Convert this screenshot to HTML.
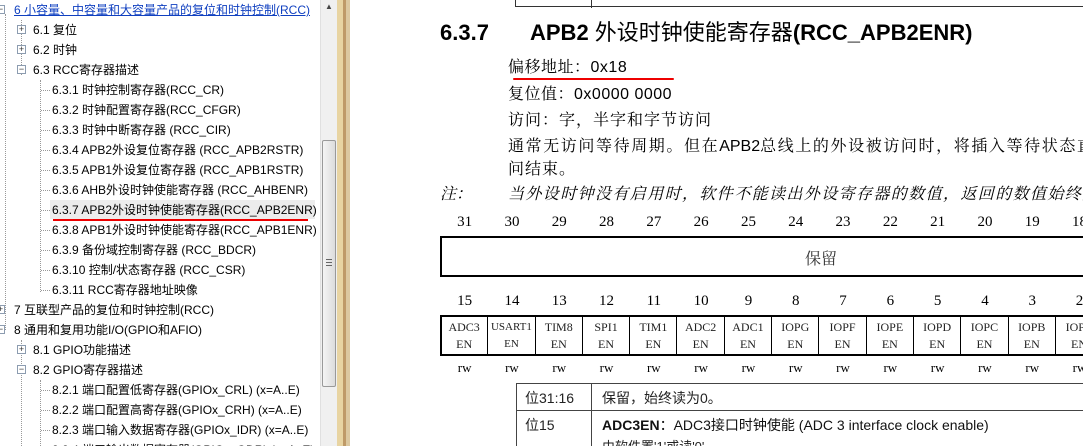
<!DOCTYPE html>
<html><head><meta charset="utf-8"><style>
*{margin:0;padding:0;box-sizing:border-box}
html{width:1083px;height:446px;overflow:hidden}
body{width:1083px;height:446px;overflow:hidden;background:#fff;position:relative;font-family:"Liberation Sans","Noto Sans CJK SC",sans-serif}
.t{position:absolute;font-size:12px;line-height:20px;white-space:nowrap;color:#000}
.box{position:absolute;width:9px;height:9px;border:1px solid #8c9cb0;background:#fff;font-size:9px;line-height:7px;text-align:center;color:#333}
.vd{position:absolute;border-left:1px dotted #999;width:0}
.hd{position:absolute;border-top:1px dotted #999;height:0}
.a{position:absolute;white-space:nowrap}
.s{font-family:"Liberation Serif","Noto Serif CJK SC",serif}
.n{position:absolute;width:47.3px;text-align:center;font-family:"Liberation Serif","Noto Serif CJK SC",serif;font-size:15px}
.c{position:absolute;width:47.3px;height:39px;border-right:1px solid #000;text-align:center;font-family:"Liberation Serif",serif;font-size:12px;line-height:17px;padding-top:3px;color:#222}
</style></head><body>
<div class="vd" style="left:5px;top:14px;height:316px"></div>
<div class="vd" style="left:21px;top:20px;height:55px"></div>
<div class="vd" style="left:40px;top:80px;height:212px"></div>
<div class="vd" style="left:21px;top:340px;height:106px"></div>
<div class="vd" style="left:40px;top:380px;height:66px"></div>
<div class="box" style="left:-4px;top:5px">−</div>
<div class="t" style="left:14px;top:0;color:#1040c0;text-decoration:underline">6 小容量、中容量和大容量产品的复位和时钟控制(RCC)</div>
<div class="box" style="left:17px;top:25px">+</div><div class="t" style="left:33px;top:20px">6.1 复位</div>
<div class="box" style="left:17px;top:45px">+</div><div class="t" style="left:33px;top:40px">6.2 时钟</div>
<div class="box" style="left:17px;top:65px">−</div><div class="t" style="left:33px;top:60px">6.3 RCC寄存器描述</div>
<div style="position:absolute;left:50px;top:200px;width:265px;height:19px;background:#ececec"></div>
<div style="position:absolute;left:53px;top:219px;width:255px;height:2px;background:#e00"></div>
<div class="hd" style="left:41px;top:90px;width:9px"></div><div class="t" style="left:52px;top:80px">6.3.1 时钟控制寄存器(RCC_CR)</div>
<div class="hd" style="left:41px;top:110px;width:9px"></div><div class="t" style="left:52px;top:100px">6.3.2 时钟配置寄存器(RCC_CFGR)</div>
<div class="hd" style="left:41px;top:130px;width:9px"></div><div class="t" style="left:52px;top:120px">6.3.3 时钟中断寄存器 (RCC_CIR)</div>
<div class="hd" style="left:41px;top:150px;width:9px"></div><div class="t" style="left:52px;top:140px">6.3.4 APB2外设复位寄存器 (RCC_APB2RSTR)</div>
<div class="hd" style="left:41px;top:170px;width:9px"></div><div class="t" style="left:52px;top:160px">6.3.5 APB1外设复位寄存器 (RCC_APB1RSTR)</div>
<div class="hd" style="left:41px;top:190px;width:9px"></div><div class="t" style="left:52px;top:180px">6.3.6 AHB外设时钟使能寄存器 (RCC_AHBENR)</div>
<div class="hd" style="left:41px;top:210px;width:9px"></div><div class="t" style="left:52px;top:200px">6.3.7 APB2外设时钟使能寄存器(RCC_APB2ENR)</div>
<div class="hd" style="left:41px;top:230px;width:9px"></div><div class="t" style="left:52px;top:220px">6.3.8 APB1外设时钟使能寄存器(RCC_APB1ENR)</div>
<div class="hd" style="left:41px;top:250px;width:9px"></div><div class="t" style="left:52px;top:240px">6.3.9 备份域控制寄存器 (RCC_BDCR)</div>
<div class="hd" style="left:41px;top:270px;width:9px"></div><div class="t" style="left:52px;top:260px">6.3.10 控制/状态寄存器 (RCC_CSR)</div>
<div class="hd" style="left:41px;top:290px;width:9px"></div><div class="t" style="left:52px;top:280px">6.3.11 RCC寄存器地址映像</div>
<div class="box" style="left:-4px;top:305px">+</div><div class="t" style="left:14px;top:300px">7 互联型产品的复位和时钟控制(RCC)</div>
<div class="box" style="left:-4px;top:325px">−</div><div class="t" style="left:14px;top:320px">8 通用和复用功能I/O(GPIO和AFIO)</div>
<div class="box" style="left:17px;top:345px">+</div><div class="t" style="left:33px;top:340px">8.1 GPIO功能描述</div>
<div class="box" style="left:17px;top:365px">−</div><div class="t" style="left:33px;top:360px">8.2 GPIO寄存器描述</div>
<div class="hd" style="left:41px;top:390px;width:9px"></div><div class="t" style="left:52px;top:380px">8.2.1 端口配置低寄存器(GPIOx_CRL) (x=A..E)</div>
<div class="hd" style="left:41px;top:410px;width:9px"></div><div class="t" style="left:52px;top:400px">8.2.2 端口配置高寄存器(GPIOx_CRH) (x=A..E)</div>
<div class="hd" style="left:41px;top:430px;width:9px"></div><div class="t" style="left:52px;top:420px">8.2.3 端口输入数据寄存器(GPIOx_IDR) (x=A..E)</div>
<div class="t" style="left:52px;top:440px">8.2.4 端口输出数据寄存器(GPIOx_ODR) (x=A..E)</div>
<div style="position:absolute;left:320px;top:0;width:17px;height:446px;background:#f0f0f0;border-left:1px solid #e0e0e0"></div>
<div class="a" style="left:325px;top:2px;font-size:8px;color:#444">▲</div>
<div style="position:absolute;left:322px;top:140px;width:14px;height:247px;border:1px solid #999;border-radius:2px;background:linear-gradient(90deg,#f4f4f4,#dcdcdc)"></div>
<div style="position:absolute;left:326px;top:259px;width:6px;height:7px;border-top:1px solid #666;border-bottom:1px solid #666"><div style="margin-top:2px;border-top:1px solid #666"></div></div>
<div style="position:absolute;left:337px;top:0;width:13px;height:446px;background:#e8d4a2"></div>
<div style="position:absolute;left:343px;top:0;width:3px;height:446px;background:#bf9a68"></div>
<div style="position:absolute;left:346px;top:0;width:4px;height:446px;background:#dcc8a0"></div>
<div style="position:absolute;left:515px;top:-2px;width:600px;height:9px;border:1px solid #333;border-top:none"></div>
<div style="position:absolute;left:591px;top:0;width:1px;height:8px;background:#333"></div>
<div class="a" style="left:440px;top:19px;font-size:22px;font-weight:bold;line-height:28px">6.3.7</div>
<div class="a" style="left:530px;top:19px;font-size:22px;font-weight:bold;line-height:28px">APB2 <span style="font-weight:normal">外设时钟使能寄存器</span>(RCC_APB2ENR)</div>
<div class="a s" style="left:508px;top:58px;font-size:16px;line-height:20px;letter-spacing:0.5px">偏移地址：<span style="font-family:'Liberation Sans',sans-serif">0x18</span></div>
<div style="position:absolute;left:513px;top:78px;width:161px;height:2px;background:#e00;border-radius:1px"></div>
<div class="a s" style="left:508px;top:85px;font-size:16px;line-height:20px;letter-spacing:0.5px">复位值：<span style="font-family:'Liberation Sans',sans-serif">0x0000 0000</span></div>
<div class="a s" style="left:508px;top:111px;font-size:16px;line-height:20px;letter-spacing:1px">访问：字，半字和字节访问</div>
<div class="a s" style="left:508px;top:137px;font-size:16px;line-height:20px;letter-spacing:1.6px">通常无访问等待周期。但在<span style="font-family:'Liberation Sans',sans-serif;letter-spacing:0">APB2</span>总线上的外设被访问时，将插入等待状态直至</div>
<div class="a s" style="left:508px;top:160px;font-size:16px;line-height:20px;letter-spacing:1px">问结束。</div>
<div class="a s" style="left:440px;top:185px;font-size:16px;line-height:20px;font-style:italic">注：</div>
<div class="a s" style="left:508px;top:185px;font-size:16px;line-height:20px;font-style:italic;letter-spacing:1.4px">当外设时钟没有启用时，软件不能读出外设寄存器的数值，返回的数值始终是0。</div>
<div class="n" style="left:441px;top:214px">31</div><div class="n" style="left:488.3px;top:214px">30</div><div class="n" style="left:535.6px;top:214px">29</div><div class="n" style="left:582.9px;top:214px">28</div><div class="n" style="left:630.2px;top:214px">27</div><div class="n" style="left:677.5px;top:214px">26</div><div class="n" style="left:724.8px;top:214px">25</div><div class="n" style="left:772.1px;top:214px">24</div><div class="n" style="left:819.4px;top:214px">23</div><div class="n" style="left:866.7px;top:214px">22</div><div class="n" style="left:914px;top:214px">21</div><div class="n" style="left:961.3px;top:214px">20</div><div class="n" style="left:1008.6px;top:214px">19</div><div class="n" style="left:1055.9px;top:214px">18</div>
<div style="position:absolute;left:440px;top:236px;width:700px;height:41px;border:2px solid #000;border-right:none"></div>
<div class="a s" style="left:805px;top:246px;font-size:16px;color:#333">保留</div>
<div class="n" style="left:441px;top:293px">15</div><div class="n" style="left:488.3px;top:293px">14</div><div class="n" style="left:535.6px;top:293px">13</div><div class="n" style="left:582.9px;top:293px">12</div><div class="n" style="left:630.2px;top:293px">11</div><div class="n" style="left:677.5px;top:293px">10</div><div class="n" style="left:724.8px;top:293px">9</div><div class="n" style="left:772.1px;top:293px">8</div><div class="n" style="left:819.4px;top:293px">7</div><div class="n" style="left:866.7px;top:293px">6</div><div class="n" style="left:914px;top:293px">5</div><div class="n" style="left:961.3px;top:293px">4</div><div class="n" style="left:1008.6px;top:293px">3</div><div class="n" style="left:1055.9px;top:293px">2</div>
<div style="position:absolute;left:440px;top:315px;width:700px;height:41px;border:2px solid #000;border-right:none"></div>
<div class="c" style="left:441px;top:316px">ADC3<br>EN</div><div class="c" style="left:488.3px;top:316px;font-size:11px">USART1<br>EN</div><div class="c" style="left:535.6px;top:316px">TIM8<br>EN</div><div class="c" style="left:582.9px;top:316px">SPI1<br>EN</div><div class="c" style="left:630.2px;top:316px">TIM1<br>EN</div><div class="c" style="left:677.5px;top:316px">ADC2<br>EN</div><div class="c" style="left:724.8px;top:316px">ADC1<br>EN</div><div class="c" style="left:772.1px;top:316px">IOPG<br>EN</div><div class="c" style="left:819.4px;top:316px">IOPF<br>EN</div><div class="c" style="left:866.7px;top:316px">IOPE<br>EN</div><div class="c" style="left:914px;top:316px">IOPD<br>EN</div><div class="c" style="left:961.3px;top:316px">IOPC<br>EN</div><div class="c" style="left:1008.6px;top:316px">IOPB<br>EN</div><div class="c" style="left:1055.9px;top:316px">IOPA<br>EN</div>
<div class="n" style="left:441px;top:360px;font-size:13px">rw</div><div class="n" style="left:488.3px;top:360px;font-size:13px">rw</div><div class="n" style="left:535.6px;top:360px;font-size:13px">rw</div><div class="n" style="left:582.9px;top:360px;font-size:13px">rw</div><div class="n" style="left:630.2px;top:360px;font-size:13px">rw</div><div class="n" style="left:677.5px;top:360px;font-size:13px">rw</div><div class="n" style="left:724.8px;top:360px;font-size:13px">rw</div><div class="n" style="left:772.1px;top:360px;font-size:13px">rw</div><div class="n" style="left:819.4px;top:360px;font-size:13px">rw</div><div class="n" style="left:866.7px;top:360px;font-size:13px">rw</div><div class="n" style="left:914px;top:360px;font-size:13px">rw</div><div class="n" style="left:961.3px;top:360px;font-size:13px">rw</div><div class="n" style="left:1008.6px;top:360px;font-size:13px">rw</div><div class="n" style="left:1055.9px;top:360px;font-size:13px">rw</div>
<div style="position:absolute;left:516px;top:383px;width:600px;height:80px;border:1px solid #444"></div>
<div style="position:absolute;left:591px;top:383px;width:1px;height:63px;background:#444"></div>
<div style="position:absolute;left:516px;top:410px;width:600px;height:1px;background:#444"></div>
<div class="a" style="left:525px;top:388px;font-size:14px;color:#222">位31:16</div>
<div class="a" style="left:602px;top:388px;font-size:14px;color:#222">保留，始终读为0。</div>
<div class="a" style="left:525px;top:415px;font-size:14px;color:#222">位15</div>
<div class="a" style="left:602px;top:415px;font-size:14px;color:#111"><b>ADC3EN</b>：ADC3接口时钟使能 (ADC 3 interface clock enable)</div>
<div class="a" style="left:602px;top:436px;font-size:13px;color:#222">由软件置'1'或读'0'</div>
</body></html>
